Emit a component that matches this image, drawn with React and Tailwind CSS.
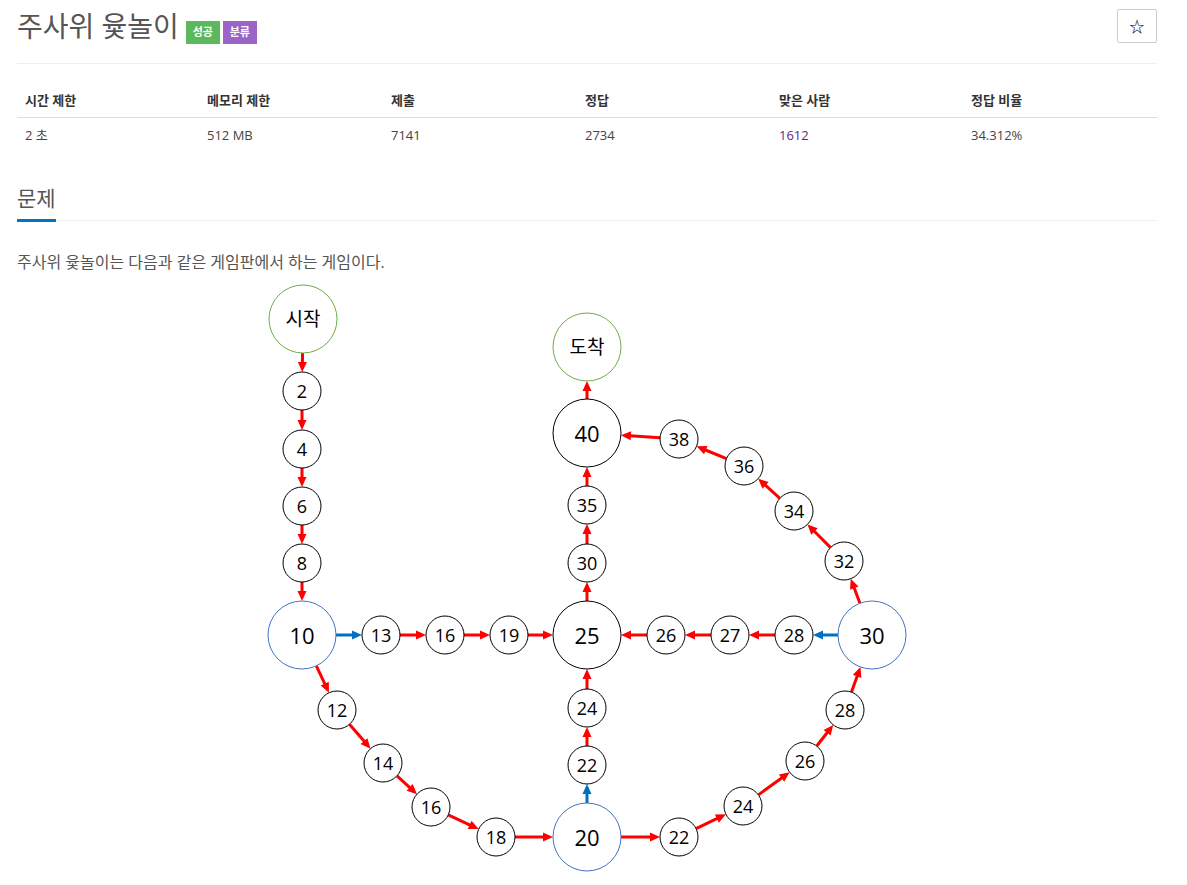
const FONT = { fontFamily: '"Open Sans", "Noto Sans CJK KR", sans-serif' };

const RED = '#ff0000';
const BLUE = '#0070c0';

// diagram nodes, in page coordinates
const NODES = {
  start: { x: 303, y: 320, r: 34, c: 'g', t: '시작' },
  n2: { x: 302, y: 392, r: 19, t: '2' },
  n4: { x: 302, y: 450, r: 19, t: '4' },
  n6: { x: 302, y: 507, r: 19, t: '6' },
  n8: { x: 302, y: 564, r: 19, t: '8' },
  n10: { x: 302, y: 636, r: 34, c: 'b', t: '10' },
  n13: { x: 381, y: 636, r: 19, t: '13' },
  n16a: { x: 445, y: 636, r: 19, t: '16' },
  n19: { x: 509, y: 636, r: 19, t: '19' },
  n25: { x: 587, y: 636, r: 34, t: '25' },
  n26a: { x: 666, y: 636, r: 19, t: '26' },
  n27: { x: 730, y: 636, r: 19, t: '27' },
  n28a: { x: 794, y: 636, r: 19, t: '28' },
  n30: { x: 872, y: 636, r: 34, c: 'b', t: '30' },
  n30u: { x: 587, y: 564, r: 19, t: '30' },
  n35: { x: 587, y: 506, r: 19, t: '35' },
  n40: { x: 587, y: 434, r: 34, t: '40' },
  end: { x: 587, y: 348, r: 34, c: 'g', t: '도착' },
  n38: { x: 679, y: 440, r: 19, t: '38' },
  n36: { x: 744, y: 467, r: 19, t: '36' },
  n34: { x: 794, y: 512, r: 19, t: '34' },
  n32: { x: 844, y: 562, r: 19, t: '32' },
  n28b: { x: 845, y: 711, r: 19, t: '28' },
  n26b: { x: 805, y: 762, r: 19, t: '26' },
  n24b: { x: 743, y: 807, r: 19, t: '24' },
  n22b: { x: 679, y: 838, r: 19, t: '22' },
  n20: { x: 587, y: 838, r: 34, c: 'b', t: '20' },
  n22u: { x: 587, y: 766, r: 19, t: '22' },
  n24u: { x: 587, y: 709, r: 19, t: '24' },
  n12: { x: 337, y: 711, r: 19, t: '12' },
  n14: { x: 383, y: 764, r: 19, t: '14' },
  n16b: { x: 431, y: 808, r: 19, t: '16' },
  n18: { x: 496, y: 838, r: 19, t: '18' },
};

const EDGES = [
  ['start', 'n2'], ['n2', 'n4'], ['n4', 'n6'], ['n6', 'n8'], ['n8', 'n10'],
  ['n10', 'n13', BLUE], ['n13', 'n16a'], ['n16a', 'n19'], ['n19', 'n25'],
  ['n10', 'n12'], ['n12', 'n14'], ['n14', 'n16b'], ['n16b', 'n18'], ['n18', 'n20'],
  ['n20', 'n22u', BLUE], ['n22u', 'n24u'], ['n24u', 'n25'],
  ['n20', 'n22b'], ['n22b', 'n24b'], ['n24b', 'n26b'], ['n26b', 'n28b'], ['n28b', 'n30'],
  ['n30', 'n28a', BLUE], ['n28a', 'n27'], ['n27', 'n26a'], ['n26a', 'n25'],
  ['n30', 'n32'], ['n32', 'n34'], ['n34', 'n36'], ['n36', 'n38'], ['n38', 'n40'],
  ['n25', 'n30u'], ['n30u', 'n35'], ['n35', 'n40'], ['n40', 'end'],
];

const STROKE = { g: '#70ad47', b: '#4472c4' };

function Arrow({ a, b, color }) {
  const dx = b.x - a.x;
  const dy = b.y - a.y;
  const d = Math.hypot(dx, dy);
  const ux = dx / d;
  const uy = dy / d;
  const sx = a.x + ux * a.r;
  const sy = a.y + uy * a.r;
  const ex = b.x - ux * b.r;
  const ey = b.y - uy * b.r;
  const L = 10;
  const W = 4.5;
  const bx = ex - ux * L;
  const by = ey - uy * L;
  const px = -uy;
  const py = ux;
  return (
    <g>
      <line x1={sx} y1={sy} x2={bx + ux} y2={by + uy} stroke={color} strokeWidth={3} />
      <polygon
        points={`${ex},${ey} ${bx + px * W},${by + py * W} ${bx - px * W},${by - py * W}`}
        fill={color}
      />
    </g>
  );
}

function Board() {
  return (
    <svg width="1140" height="600" viewBox="17 285 1140 600" className="block mt-[10px]" style={FONT}>
      {EDGES.map(([f, t, c]) => (
        <Arrow key={f + t} a={NODES[f]} b={NODES[t]} color={c || RED} />
      ))}
      {Object.entries(NODES).map(([id, n]) => (
        <g key={id}>
          <circle cx={n.x} cy={n.y} r={n.r} fill="#fff" stroke={STROKE[n.c] || '#000'} strokeWidth={1} />
          <text
            x={n.x}
            y={n.y}
            textAnchor="middle"
            dominantBaseline="central"
            fontSize={n.r > 30 ? (n.c === 'g' ? 19 : 22) : 18}
            fill="#000"
          >
            {n.t}
          </text>
        </g>
      ))}
    </svg>
  );
}

const STATS = [
  ['시간 제한', '2 초'],
  ['메모리 제한', '512 MB'],
  ['제출', '7141'],
  ['정답', '2734'],
  ['맞은 사람', '1612'],
  ['정답 비율', '34.312%'],
];

export default function App() {
  return (
    <div className="min-h-screen bg-white text-[#333]" style={FONT}>
      <div className="w-[1140px] ml-[17px]">
        {/* title */}
        <div className="h-[64px] pt-[9px] flex items-start justify-between border-b border-[#eee]">
          <div className="flex items-start">
            <h1 className="text-[28px] leading-[34px] text-[#555] font-normal">주사위 윷놀이</h1>
            <span className="ml-[7px] mt-[12px] h-[23px] w-[34px] flex items-center justify-center bg-[#5cb85c] text-white text-[11px] font-bold">
              성공
            </span>
            <span className="ml-[3px] mt-[12px] h-[23px] w-[34px] flex items-center justify-center bg-[#9b65c8] text-white text-[11px] font-bold">
              분류
            </span>
          </div>
          <button className="w-[40px] h-[34px] border border-[#ccc] rounded-[2px] flex items-center justify-center text-[15px] text-black bg-white">
            ☆
          </button>
        </div>

        {/* stats table */}
        <div className="mt-[20px] text-[13px]">
          <div className="grid grid-cols-[182px_184px_194px_194px_192px_1fr] h-[34px] items-center border-b border-[#ddd] font-bold text-[#333]">
            {STATS.map(([h]) => (
              <div key={h} className="pl-[8px]">{h}</div>
            ))}
          </div>
          <div className="grid grid-cols-[182px_184px_194px_194px_192px_1fr] h-[35px] items-center text-[#444]">
            {STATS.map(([h, v]) => (
              <div key={h} className={h === '맞은 사람' ? 'pl-[8px] text-[#5b2a86]' : 'pl-[8px]'}>
                {v}
              </div>
            ))}
          </div>
        </div>

        {/* problem heading */}
        <div className="mt-[30px] border-b border-[#eee] leading-none">
          <span className="inline-block text-[21px] leading-[30px] pb-[6px] border-b-[3px] border-[#0076c0] mb-[-2px] text-[#555]">
            문제
          </span>
        </div>

        <p className="mt-[29px] text-[16px] leading-[24px] text-[#555]">
          주사위 윷놀이는 다음과 같은 게임판에서 하는 게임이다.
        </p>

        <Board />
      </div>
    </div>
  );
}
